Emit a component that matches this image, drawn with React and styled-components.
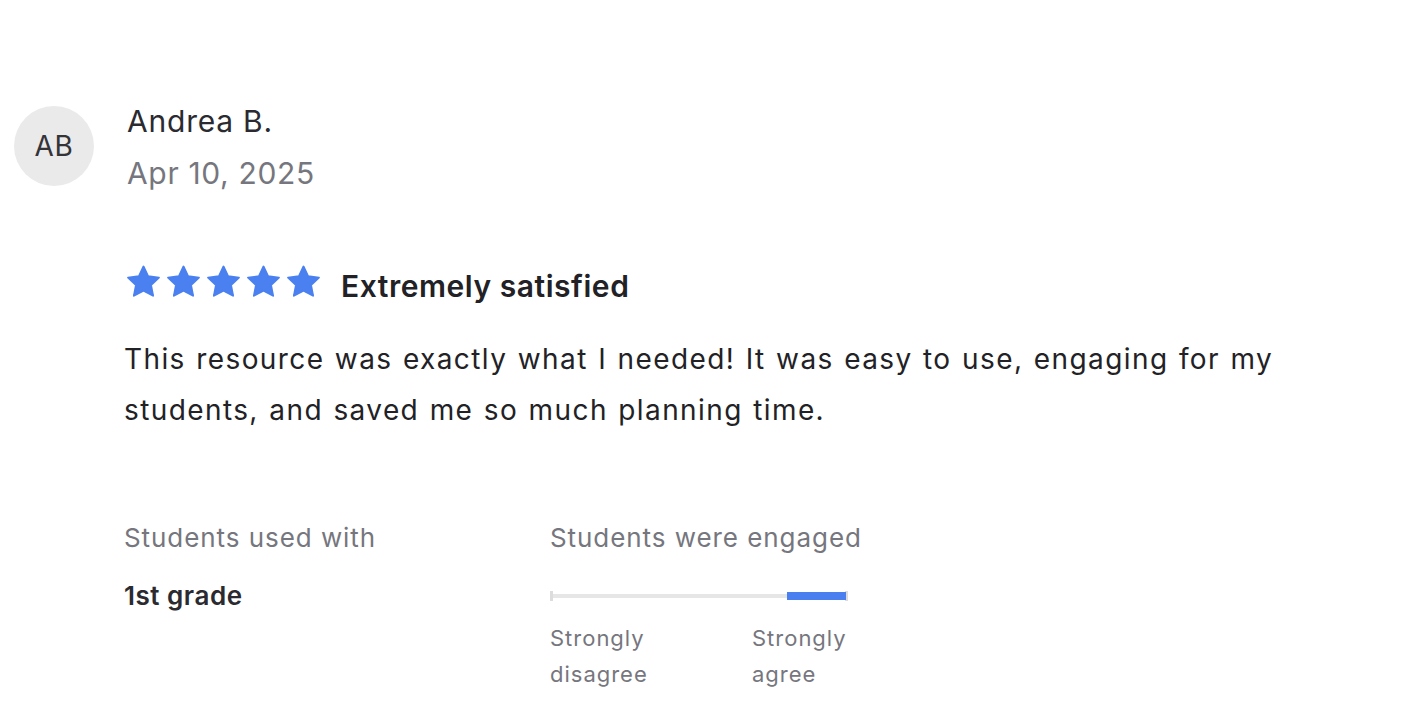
import React from 'react';
import styled, { createGlobalStyle } from 'styled-components';

const GlobalStyle = createGlobalStyle`
  html, body {
    margin: 0;
    padding: 0;
    background: #ffffff;
  }
  body {
    font-family: Inter, "Noto Sans", "Liberation Sans", sans-serif;
    color: #222226;
  }
`;

const Review = styled.div`
  padding: 106px 0 0 14px;
  display: flex;
  flex-direction: column;
`;

const Header = styled.div`
  display: flex;
  align-items: flex-start;
  gap: 33px;
`;

const Avatar = styled.div`
  width: 80px;
  height: 80px;
  border-radius: 50%;
  background: #eaeaea;
  color: #333338;
  font-size: 28px;
  letter-spacing: 0.02em;
  display: flex;
  align-items: center;
  justify-content: center;
`;

const Who = styled.div`
  display: flex;
  flex-direction: column;
`;

const Name = styled.div`
  font-size: 30px;
  line-height: 36px;
  letter-spacing: 0.026em;
  margin-top: -3px;
  color: #2a2a30;
`;

const DateText = styled.div`
  font-size: 30px;
  line-height: 36px;
  letter-spacing: 0.022em;
  margin-top: 16px;
  color: #76767e;
`;

const Body = styled.div`
  padding-left: 110px;
`;

const RatingRow = styled.div`
  display: flex;
  align-items: flex-start;
  gap: 18px;
  margin-top: 72px;
`;

const Stars = styled.div`
  display: flex;
  gap: 1px;
`;

const Label = styled.div`
  font-size: 30px;
  font-weight: 600;
  line-height: 36px;
  margin-top: 5px;
  letter-spacing: 0.018em;
  color: #222226;
`;

const Text = styled.p`
  margin: 30px 0 0;
  font-size: 28px;
  line-height: 51px;
  letter-spacing: 0.05em;
  word-spacing: 1.2px;
  color: #222226;
  max-width: 1180px;
`;

const Facts = styled.div`
  display: flex;
  margin-top: 86px;
`;

const Fact = styled.div`
  width: ${p => p.$w}px;
  display: flex;
  flex-direction: column;
`;

const FactTitle = styled.div`
  font-size: 26px;
  line-height: 32px;
  letter-spacing: 0.036em;
  color: #76767e;
`;

const FactValue = styled.div`
  font-size: 26px;
  font-weight: 600;
  line-height: 32px;
  letter-spacing: 0.02em;
  margin-top: 26px;
  color: #2a2a30;
`;

const Scale = styled.div`
  position: relative;
  width: 298px;
  height: 12px;
  margin-top: 36px;
`;

const Track = styled.div`
  position: absolute;
  left: 0;
  right: 0;
  top: 4px;
  height: 4px;
  background: #e6e6e6;
`;

const Tick = styled.div`
  position: absolute;
  top: 1px;
  width: 3px;
  height: 10px;
  background: #dcdcdc;
  ${p => (p.$end ? 'right: 0;' : 'left: 0;')}
`;

const Fill = styled.div`
  position: absolute;
  top: 2px;
  height: 8px;
  background: #4a7ff0;
`;

const ScaleLabels = styled.div`
  display: grid;
  grid-template-columns: 202px 1fr;
  width: 320px;
  margin-top: 18px;
`;

const ScaleLabel = styled.div`
  max-width: 130px;
  font-size: 22px;
  line-height: 36px;
  letter-spacing: 0.045em;
  color: #76767e;
`;

const Star = () => (
  <svg width="39" height="38" viewBox="0 0 24 24">
    <path
      d="M12 2.2l2.95 6.2 6.8.85-5 4.7 1.3 6.75L12 17.4l-6.05 3.3 1.3-6.75-5-4.7 6.8-.85z"
      fill="#4a80f0"
      stroke="#4a80f0"
      strokeWidth="1.2"
      strokeLinejoin="round"
    />
  </svg>
);

const App = () => (
  <>
    <GlobalStyle />
    <Review>
      <Header>
        <Avatar>AB</Avatar>
        <Who>
          <Name>Andrea B.</Name>
          <DateText>Apr 10, 2025</DateText>
        </Who>
      </Header>
      <Body>
        <RatingRow>
          <Stars>
            {[0, 1, 2, 3, 4].map(i => (
              <Star key={i} />
            ))}
          </Stars>
          <Label>Extremely satisfied</Label>
        </RatingRow>
        <Text>
          This resource was exactly what I needed! It was easy to use, engaging for my
          students, and saved me so much planning time.
        </Text>
        <Facts>
          <Fact $w={426}>
            <FactTitle>Students used with</FactTitle>
            <FactValue>1st grade</FactValue>
          </Fact>
          <Fact $w={400}>
            <FactTitle>Students were engaged</FactTitle>
            <Scale>
              <Track />
              <Tick />
              <Tick $end />
              <Fill style={{ left: `${(237 / 298) * 100}%`, width: `${(59 / 298) * 100}%` }} />
            </Scale>
            <ScaleLabels>
              <ScaleLabel>Strongly disagree</ScaleLabel>
              <ScaleLabel>Strongly agree</ScaleLabel>
            </ScaleLabels>
          </Fact>
        </Facts>
      </Body>
    </Review>
  </>
);

export default App;
